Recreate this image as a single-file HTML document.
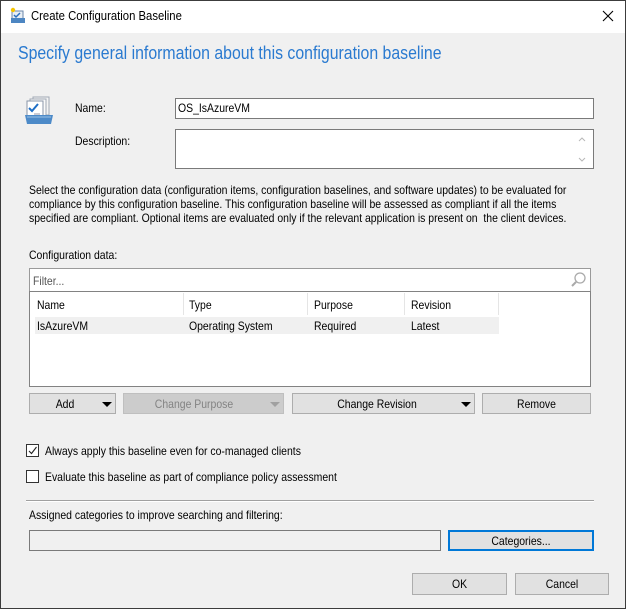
<!DOCTYPE html>
<html><head><meta charset="utf-8"><style>
*{margin:0;padding:0;box-sizing:border-box}
body{width:626px;height:609px;overflow:hidden;background:#fff;font-family:"Liberation Sans",sans-serif;font-size:12px;color:#000}
.win{position:absolute;left:0;top:0;width:626px;height:609px;background:#f0f0f0}
.frame{position:absolute;left:0;top:0;width:626px;height:609px;border:1px solid #3c3c3c;pointer-events:none}
.tb{position:absolute;left:0;top:0;width:626px;height:33px;background:#fff}
.a{position:absolute}
.t{position:absolute;white-space:nowrap;transform-origin:0 50%;transform:scaleX(.87);line-height:14px}
.box{position:absolute;background:#fff;border:1px solid #7a7a7a}
.btn{position:absolute;background:#e1e1e1;border:1px solid #adadad;height:21px}
.btn span{position:absolute;top:3px;white-space:nowrap;transform:scaleX(.87);transform-origin:50% 50%;width:100%;text-align:center;left:0;line-height:14px}
.arr{position:absolute;top:8px;width:0;height:0;border-left:5px solid transparent;border-right:5px solid transparent;border-top:5px solid #000}
.cb{position:absolute;width:13px;height:13px;border:1px solid #333;background:#fff}
</style></head><body>
<div class="win">
<div class="tb"></div>
<svg class="a" style="left:9px;top:7px" width="18" height="18" viewBox="0 0 18 18"><rect x="3" y="4" width="11" height="9" fill="#e8eef4" stroke="#6a86a8"/><rect x="2" y="11" width="14" height="5" fill="#4d86c2"/><path d="M5 8l2 2 4-4" stroke="#2a6fbf" fill="none" stroke-width="1.5"/><circle cx="4" cy="3" r="2.2" fill="#f5c400"/></svg>
<div class="t" style="left:31px;top:9px;font-size:13px">Create Configuration Baseline</div>
<svg class="a" style="left:602px;top:10px" width="12" height="12"><path d="M1 1L11 11M11 1L1 11" stroke="#000" stroke-width="1.1"/></svg>
<div class="t" style="left:18px;top:43px;font-size:18px;color:#2a7ad0;line-height:20px;transform:scaleX(.88)">Specify general information about this configuration baseline</div>
<svg class="a" style="left:24px;top:95px" width="34" height="32" viewBox="0 0 34 32"><rect x="9" y="2" width="16" height="18" fill="#f4f4f4" stroke="#a0a8b4"/><rect x="6" y="4" width="16" height="18" fill="#fafafa" stroke="#a0a8b4"/><rect x="3" y="6" width="16" height="18" fill="#fff" stroke="#8a96a8"/><path d="M5 13l3 3 6-7" stroke="#1f6fc6" fill="none" stroke-width="2"/><path d="M10 19h6M10 21h6" stroke="#99a"/><path d="M1 20h28l-2 9H3z" fill="#4d8ac8"/><path d="M3 22h24" stroke="#9cc2e6"/></svg>
<div class="t" style="left:75px;top:101px">Name:</div>
<div class="box" style="left:175px;top:98px;width:419px;height:21px"></div>
<div class="t" style="left:178px;top:101px">OS_IsAzureVM</div>
<div class="t" style="left:75px;top:134px">Description:</div>
<div class="box" style="left:175px;top:129px;width:419px;height:40px"></div>
<svg class="a" style="left:577px;top:135px" width="10" height="30"><path d="M2 6l3-3 3 3M2 23l3 3 3-3" stroke="#b8b8b8" fill="none"/></svg>
<div class="t" style="left:29px;top:183px">Select the configuration data (configuration items, configuration baselines, and software updates) to be evaluated for</div>
<div class="t" style="left:29px;top:197px">compliance by this configuration baseline. This configuration baseline will be assessed as compliant if all the items</div>
<div class="t" style="left:29px;top:211px">specified are compliant. Optional items are evaluated only if the relevant application is present on&nbsp; the client devices.</div>
<div class="t" style="left:29px;top:248px">Configuration data:</div>
<div class="box" style="left:29px;top:268px;width:562px;height:24px;border-color:#9a9a9a"></div>
<div class="t" style="left:33px;top:274px;color:#555">Filter...</div>
<svg class="a" style="left:570px;top:271px" width="17" height="17"><circle cx="10" cy="7" r="5" fill="none" stroke="#aaa" stroke-width="1.3"/><path d="M6 11L2 15" stroke="#aaa" stroke-width="2"/></svg>
<div class="box" style="left:29px;top:291px;width:562px;height:96px;border-color:#828282"></div>
<div class="a" style="left:183px;top:293px;width:1px;height:22px;background:#e5e5e5"></div>
<div class="a" style="left:307px;top:293px;width:1px;height:22px;background:#e5e5e5"></div>
<div class="a" style="left:404px;top:293px;width:1px;height:22px;background:#e5e5e5"></div>
<div class="a" style="left:498px;top:293px;width:1px;height:22px;background:#e5e5e5"></div>
<div class="t" style="left:37px;top:298px">Name</div>
<div class="t" style="left:189px;top:298px">Type</div>
<div class="t" style="left:314px;top:298px">Purpose</div>
<div class="t" style="left:411px;top:298px">Revision</div>
<div class="a" style="left:35px;top:317px;width:464px;height:17px;background:#f0f0f0"></div>
<div class="t" style="left:37px;top:319px">IsAzureVM</div>
<div class="t" style="left:189px;top:319px">Operating System</div>
<div class="t" style="left:314px;top:319px">Required</div>
<div class="t" style="left:411px;top:319px">Latest</div>
<div class="btn" style="left:29px;top:393px;width:87px"><span style="width:70px">Add</span><i class="arr" style="left:72px"></i></div>
<div class="btn" style="left:123px;top:393px;width:161px;background:#cccccc;border-color:#bfbfbf;color:#838383"><span style="width:140px">Change Purpose</span><i class="arr" style="left:146px;border-top-color:#a0a0a0"></i></div>
<div class="btn" style="left:292px;top:393px;width:183px"><span style="width:168px">Change Revision</span><i class="arr" style="left:168px"></i></div>
<div class="btn" style="left:482px;top:393px;width:109px"><span>Remove</span></div>
<div class="cb" style="left:26px;top:444px"></div>
<svg class="a" style="left:27px;top:445px" width="11" height="11"><path d="M2 6l2.5 2.5L9.5 2" stroke="#222" fill="none" stroke-width="1.1"/></svg>
<div class="t" style="left:45px;top:444px">Always apply this baseline even for co-managed clients</div>
<div class="cb" style="left:26px;top:470px"></div>
<div class="t" style="left:45px;top:470px">Evaluate this baseline as part of compliance policy assessment</div>
<div class="a" style="left:26px;top:500px;width:568px;height:1px;background:#a0a0a0"></div>
<div class="a" style="left:26px;top:501px;width:568px;height:1px;background:#fff"></div>
<div class="t" style="left:29px;top:508px">Assigned categories to improve searching and filtering:</div>
<div class="box" style="left:29px;top:530px;width:412px;height:21px;background:#f0f0f0;border-color:#7a7a7a"></div>
<div class="btn" style="left:448px;top:530px;width:146px;border:2px solid #0078d7"><span style="top:2px">Categories...</span></div>
<div class="btn" style="left:412px;top:573px;width:95px;height:22px"><span>OK</span></div>
<div class="btn" style="left:515px;top:573px;width:94px;height:22px"><span>Cancel</span></div>
<div class="frame"></div>
</div>
</body></html>
